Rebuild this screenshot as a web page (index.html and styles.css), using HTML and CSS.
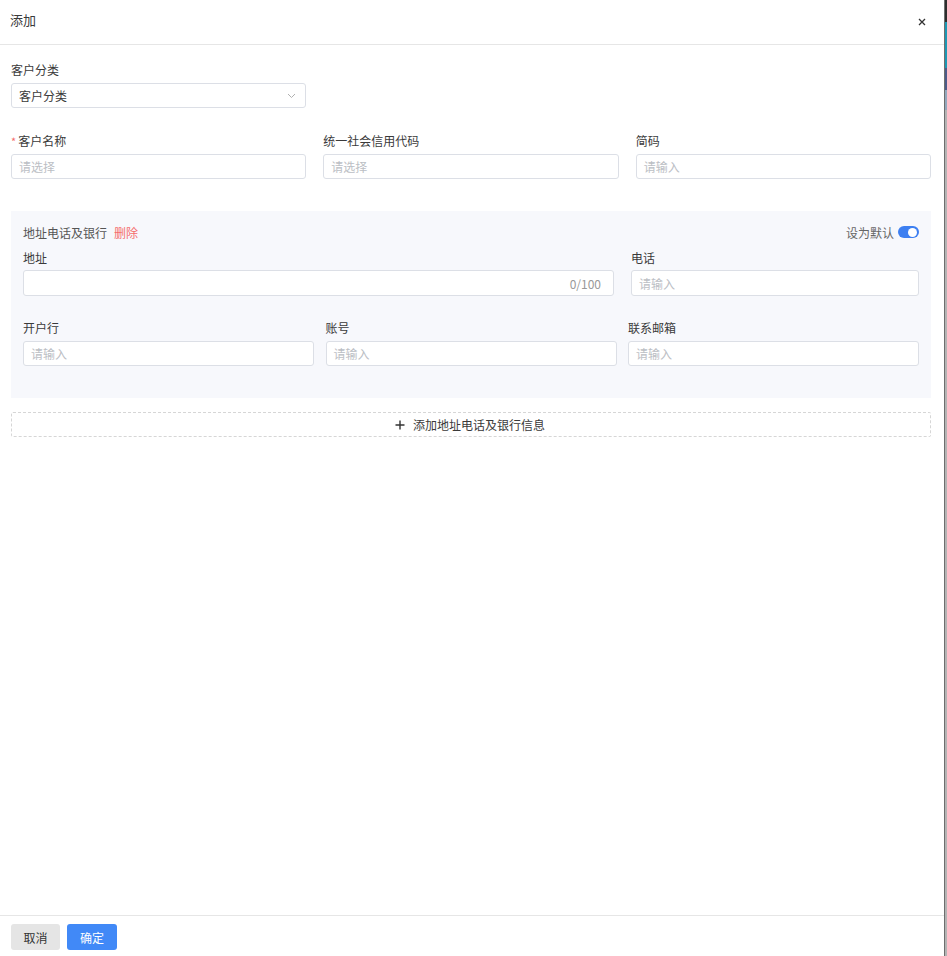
FILE: index.html
```html
<!DOCTYPE html>
<html lang="zh-CN">
<head>
<meta charset="utf-8">
<title>添加</title>
<link rel="stylesheet" href="styles.css">
</head>
<body>
<div class="page">
  <div class="dialog">
    <header class="dlg-head">
      <span class="title">添加</span>
      <svg class="close" width="8" height="8" viewBox="0 0 8 8"><path d="M1 1L7 7M7 1L1 7" stroke="#333" stroke-width="1.3" fill="none"/></svg>
    </header>
    <main class="dlg-body">
      <div class="grid3 row-first">
        <div class="field">
          <div class="label">客户分类</div>
          <div class="input select"><span class="value">客户分类</span>
            <svg class="chev" width="9" height="6" viewBox="0 0 9 6"><path d="M1 1L4.5 4.5L8 1" stroke="#b0b0b0" stroke-width="1" fill="none"/></svg>
          </div>
        </div>
      </div>
      <div class="grid3 row-second">
        <div class="field">
          <div class="label"><span class="req">*</span>客户名称</div>
          <div class="input"><span class="ph">请选择</span></div>
        </div>
        <div class="field">
          <div class="label">统一社会信用代码</div>
          <div class="input"><span class="ph">请选择</span></div>
        </div>
        <div class="field">
          <div class="label">简码</div>
          <div class="input"><span class="ph">请输入</span></div>
        </div>
      </div>

      <section class="bank">
        <div class="bank-head">
          <div class="bank-title">地址电话及银行<span class="del">删除</span></div>
          <div class="default">设为默认<span class="toggle"><span class="knob"></span></span></div>
        </div>
        <div class="grid-addr">
          <div class="field">
            <div class="label">地址</div>
            <div class="input tall count"><span class="cnt">0/100</span></div>
          </div>
          <div class="field">
            <div class="label">电话</div>
            <div class="input tall"><span class="ph">请输入</span></div>
          </div>
        </div>
        <div class="grid3b">
          <div class="field">
            <div class="label">开户行</div>
            <div class="input"><span class="ph">请输入</span></div>
          </div>
          <div class="field">
            <div class="label">账号</div>
            <div class="input"><span class="ph">请输入</span></div>
          </div>
          <div class="field">
            <div class="label">联系邮箱</div>
            <div class="input"><span class="ph">请输入</span></div>
          </div>
        </div>
      </section>

      <div class="add-btn">
        <svg width="10" height="10" viewBox="0 0 10 10"><path d="M5 0.5V9.5M0.5 5H9.5" stroke="#333" stroke-width="1.4" fill="none"/></svg>
        <span>添加地址电话及银行信息</span>
      </div>
    </main>
    <footer class="dlg-foot">
      <button class="btn btn-cancel">取消</button>
      <button class="btn btn-ok">确定</button>
    </footer>
  </div>
  <div class="edge"></div>
</div>
</body>
</html>
```

FILE: styles.css
```css
* { box-sizing: border-box; }
html, body { margin: 0; padding: 0; }
body {
  font-family: "Noto Sans CJK SC", "Noto Sans", sans-serif;
  font-size: 12px;
  color: #3a3a3a;
  background: #fff;
}
.page {
  display: flex;
  height: 956px;
  width: 947px;
  overflow: hidden;
}
.dialog {
  width: 945px;
  flex: none;
  display: flex;
  flex-direction: column;
  border-right: 1px solid #6e6e6e;
  background: #fff;
}
.edge {
  flex: 1;
  background: linear-gradient(to bottom, #2d2d2d 0, #2d2d2d 22px, #1d98b4 22px, #1d98b4 68px, #4d5b88 68px, #4d5b88 90px, #93a8bd 90px, #93a8bd 110px, #b4b4b4 110px);
}
.dlg-head {
  height: 45px;
  border-bottom: 1px solid #e6e6e6;
  display: flex;
  align-items: center;
  justify-content: space-between;
  padding: 0 18px 0 10px;
  flex: none;
}
.title { font-size: 13px; color: #3a3a3a; margin-top: -6px; }
.close { display: block; }

.dlg-body {
  flex: 1;
  padding: 15px 13px 0 11px;
}
.grid3 {
  display: grid;
  grid-template-columns: repeat(3, 1fr);
  column-gap: 17px;
}
.row-second { margin-top: 23px; }
.label {
  line-height: 20px;
  height: 20px;
  color: #3a3a3a;
  margin-bottom: 3px;
  white-space: nowrap;
}
.req { color: #f56c6c; margin-right: 2px; font-size: 11px; }
.input {
  height: 25px;
  border: 1px solid #dcdfe6;
  border-radius: 3px;
  background: #fff;
  display: flex;
  align-items: center;
  padding: 0 7px;
}
.ph { color: #bbbec4; }
.value { color: #3a3a3a; }
.select { justify-content: space-between; padding-right: 9px; }
.chev { display: block; }

.bank {
  margin-top: 32px;
  background: #f7f8fc;
  padding: 11px 12px 32px 12px;
}
.bank-head {
  height: 20px;
  display: flex;
  align-items: center;
  justify-content: space-between;
}
.bank-title { color: #555; }
.del { color: #f56c6c; margin-left: 7px; }
.default { color: #666; display: flex; align-items: center; }
.toggle {
  width: 21px;
  height: 12px;
  border-radius: 6px;
  background: #3d7ff1;
  margin-left: 4px;
  position: relative;
  display: inline-block;
}
.knob {
  position: absolute;
  right: 2px;
  top: 1.5px;
  width: 9px;
  height: 9px;
  border-radius: 50%;
  background: #fff;
}
.grid-addr {
  display: grid;
  grid-template-columns: 591px 1fr;
  column-gap: 17px;
  margin-top: 6px;
}
.grid-addr .label { margin-bottom: 2px; }
.tall { height: 26px; }
.count { justify-content: flex-end; padding-right: 12px; }
.cnt { color: #999; }
.grid3b {
  display: grid;
  grid-template-columns: repeat(3, 1fr);
  column-gap: 11.5px;
  margin-top: 22px;
}

.add-btn {
  margin-top: 14px;
  height: 25px;
  border: 1px dashed #d6d6d6;
  border-radius: 2px;
  display: flex;
  align-items: center;
  justify-content: center;
  gap: 8px;
  color: #3a3a3a;
  padding-right: 2px;
}
.add-btn svg { display: block; }

.dlg-foot {
  height: 41px;
  flex: none;
  border-top: 1px solid #e6e6e6;
  padding: 8px 11px 0;
  display: flex;
  gap: 7px;
  align-items: flex-start;
}
.btn {
  height: 26px;
  width: 49px;
  border: none;
  border-radius: 3px;
  font-family: inherit;
  font-size: 12px;
  padding: 0;
  cursor: pointer;
}
.btn-cancel { background: #e5e5e5; color: #333; }
.btn-ok { background: #4189f7; color: #fff; width: 50px; }
```
